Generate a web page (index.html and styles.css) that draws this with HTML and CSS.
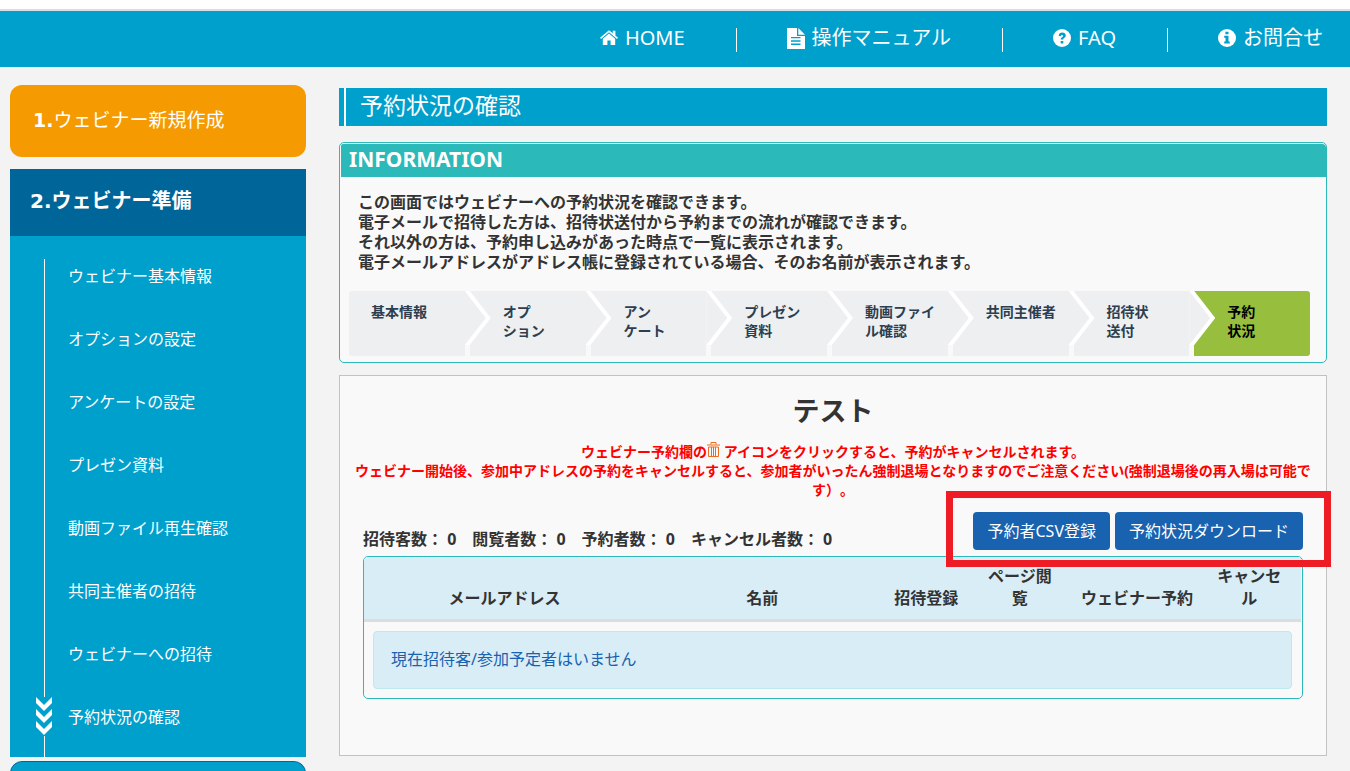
FILE: index.html
```html
<!DOCTYPE html>
<html lang="ja">
<head>
<meta charset="utf-8">
<title>予約状況の確認</title>
<link rel="stylesheet" href="styles.css">
</head>
<body>
<div class="page">
  <header class="topbar">
    <nav class="topnav">
      <a href="#"><svg class="icon" viewBox="0 0 18 18"><path d="M9 4.6 2.8 9.8V16h4.6v-4.4h3.2V16h4.6V9.8z"/><path d="M9 1.2 0 8.8l1 1.2 8-6.7 8 6.7 1-1.2-2.6-2.2V1.8h-2.6v2.5z"/></svg>HOME</a>
      <a href="#"><svg class="icon icon-file" viewBox="0 0 18 21"><path fill-rule="evenodd" d="M0 0h10v8h8v13H0zM4 9v1.3h9.500V9zm0 3.300v1.400h9.500v-1.400zm0 3.300V17h9.500v-1.400z"/><path d="M11.300 0 18 6.700h-6.700z"/></svg>操作マニュアル</a>
      <a href="#"><svg class="icon" viewBox="0 0 18 18"><circle cx="9" cy="9" r="9"/><path class="cut" d="M5.700 7C5.900 4.600 7.300 3.600 9.200 3.600c2 0 3.600 1.200 3.600 3 0 2.400-2.600 2.300-2.600 4H7.700c0-2.500 2.400-2.600 2.400-3.700 0-.6-.4-.9-1-.9-.7 0-1 .4-1.200 1.200zM7.700 11.900h2.600v2.500H7.700z"/></svg>FAQ</a>
      <a href="#"><svg class="icon" viewBox="0 0 18 18"><circle cx="9" cy="9" r="9"/><path class="cut" d="M7.400 2.700h3.100v2.600H7.400zM6.200 6.700h4.300v5.800h1.300v2H6.200v-2h1.300V8.700H6.200z"/></svg>お問合せ</a>
    </nav>
  </header>

  <div class="layout">
    <aside class="sidebar">
      <a class="side-create" href="#"><b>1.</b>ウェビナー新規作成</a>
      <div class="side-group">
        <h2><b>2.</b>ウェビナー準備</h2>
        <ul>
          <li><a href="#">ウェビナー基本情報</a></li>
          <li><a href="#">オプションの設定</a></li>
          <li><a href="#">アンケートの設定</a></li>
          <li><a href="#">プレゼン資料</a></li>
          <li><a href="#">動画ファイル再生確認</a></li>
          <li><a href="#">共同主催者の招待</a></li>
          <li><a href="#">ウェビナーへの招待</a></li>
          <li><svg class="marker" viewBox="0 0 16 39"><path d="M0 0l8 8 8-8v6l-8 8-8-8zM0 12l8 8 8-8v6l-8 8-8-8zM0 24l8 8 8-8v6l-8 8-8-8z"/></svg><a href="#">予約状況の確認</a></li>
        </ul>
      </div>
      <div class="side-next"></div>
    </aside>

    <main class="main">
      <h1 class="page-title">予約状況の確認</h1>

      <section class="info">
        <h2>INFORMATION</h2>
        <p>この画面ではウェビナーへの予約状況を確認できます。<br>電子メールで招待した方は、招待状送付から予約までの流れが確認できます。<br>それ以外の方は、予約申し込みがあった時点で一覧に表示されます。<br>電子メールアドレスがアドレス帳に登録されている場合、そのお名前が表示されます。</p>
        <ol class="steps">
          <li>基本情報</li>
          <li>オプ<br>ション</li>
          <li>アン<br>ケート</li>
          <li>プレゼン<br>資料</li>
          <li>動画ファイ<br>ル確認</li>
          <li>共同主催者</li>
          <li>招待状<br>送付</li>
          <li class="current">予約<br>状況</li>
        </ol>
      </section>

      <section class="panel">
        <h2>テスト</h2>
        <p class="notice">ウェビナー予約欄の<svg class="trash" viewBox="0 0 13 15"><path d="M4 2.500V.5h5v2M0 3h13M1.500 5v9.500h10V5zM4.500 5v9M6.500 5v9M8.500 5v9"/></svg> アイコンをクリックすると、予約がキャンセルされます。<br>ウェビナー開始後、参加中アドレスの予約をキャンセルすると、参加者がいったん強制退場となりますのでご注意ください(強制退場後の再入場は可能で<br>す）。</p>
        <div class="toolbar">
          <p class="counts">招待客数： 0　閲覧者数： 0　予約者数： 0　キャンセル者数： 0</p>
          <div class="actions">
            <button type="button">予約者CSV登録</button>
            <button type="button">予約状況ダウンロード</button>
          </div>
        </div>
        <div class="table-box">
          <table>
            <thead>
              <tr>
                <th class="col-mail">メールアドレス</th>
                <th class="col-name">名前</th>
                <th class="col-small">招待登録</th>
                <th class="col-small col-view">ページ閲覧</th>
                <th class="col-reserve">ウェビナー予約</th>
                <th class="col-small col-cancel">キャンセル</th>
              </tr>
            </thead>
            <tbody>
              <tr><td colspan="6"><div class="empty">現在招待客/参加予定者はいません</div></td></tr>
            </tbody>
          </table>
        </div>
      </section>
    </main>
  </div>
</div>
</body>
</html>
```

FILE: styles.css
```css
* { box-sizing: border-box; }

body {
  margin: 0;
  background: #f3f3f3;
  color: #333;
  font-family: "Noto Sans", "Noto Sans CJK JP", sans-serif;
  font-size: 16px;
  line-height: 22px;
  text-spacing-trim: space-all;
}

h1, h2, p, ul, ol { margin: 0; padding: 0; }
ul, ol { list-style: none; }
a { color: inherit; text-decoration: none; }

.page { height: 100vh; overflow: hidden; }

/* header */
.topbar {
  border-top: 9px solid #fff;
  background: #00a0cd;
}
.topnav {
  display: flex;
  justify-content: flex-end;
  padding: 17px 27px 15px 0;
  border-top: 2px solid #d8dfe6;
  color: #fff;
  font-size: 20px;
  line-height: 20px;
}
.topnav a {
  display: flex;
  align-items: center;
  gap: 7px;
  height: 24px;
  padding: 0 51px 4px 50px;
  border-left: 1px solid #fff;
}
.topnav a:first-child { border-left: 0; }
.topnav a:last-child { padding-right: 0; }
.icon { width: 18px; height: 18px; fill: #fff; }
.icon-file { height: 21px; }
.icon .cut { fill: #00a0cd; }

.layout {
  display: flex;
  align-items: flex-start;
  gap: 33px;
  padding: 18px 23px 0 10px;
}

/* sidebar */
.sidebar { flex: 0 0 296px; color: #fff; }
.sidebar b { font-family: "DejaVu Sans", sans-serif; }
.side-create {
  display: block;
  margin-bottom: 12px;
  padding: 23px 23px 25px;
  border-radius: 12px;
  background: #f59a00;
  font-size: 19px;
  line-height: 24px;
}
.side-group h2 {
  padding: 20px 20px 23px;
  background: #006699;
  font-size: 20px;
  line-height: 24px;
}
.side-group ul {
  padding: 8px 0 9px;
  background: linear-gradient(#fff, #fff) 34px 23px / 1px 100% no-repeat #00a0cd;
}
.side-group li {
  display: flex;
  align-items: center;
  height: 63px;
  padding-left: 58px;
}
.side-group li:has(.marker) { gap: 16px; padding-left: 26px; }
.marker { width: 16px; height: 39px; background: #00a0cd; fill: #fff; }
.side-next {
  height: 72px;
  margin-top: 4px;
  border: 1px solid #006699;
  border-radius: 12px;
  background: #00a0cd;
}

/* main column */
.main { flex: 1; min-width: 0; padding-top: 3px; }
.page-title {
  padding: 3px 16px 7px;
  border-left: 5px solid #00a0cd;
  background: linear-gradient(#fff, #fff) 0 0 / 2px 100% no-repeat #00a0cd;
  color: #fff;
  font-size: 23px;
  font-weight: 400;
  line-height: 28px;
}

.info {
  margin-top: 16px;
  padding: 1px 0 6px 1px;
  border: 1px solid #2cb9b9;
  border-radius: 5px;
  background: #f9f9f9;
}
.info h2 {
  padding: 3px 8px 6px;
  border-radius: 2px 4px 0 0;
  background: #2cb9b9;
  color: #fff;
  font-size: 21px;
  line-height: 24px;
}
.info p {
  padding: 15px 17px 19px;
  font-weight: 700;
  line-height: 20px;
}

.steps {
  display: flex;
  gap: 5px;
  padding: 0 16px 0 8px;
  color: #2c3e50;
  font-size: 14px;
  font-weight: 700;
  line-height: 19px;
}
.steps li {
  position: relative;
  flex: 1 1 100px;
  height: 65px;
  padding: 11px 0 0 33px;
  background: #edeff0;
  white-space: nowrap;
}
.steps li:first-child { padding-left: 22px; border-radius: 3px 0 0 3px; }
.steps li:not(:last-child)::before,
.steps li:not(:last-child)::after {
  content: "";
  position: absolute;
  z-index: 1;
  top: 0;
  left: 100%;
  width: 26px;
  height: 54px;
  background: #fff;
  clip-path: polygon(0 0, 5px 0, 26px 27px, 5px 54px, 0 54px);
}
.steps li:not(:last-child)::after {
  background: #edeff0;
  clip-path: polygon(0 0, 21px 27px, 0 54px);
}
.steps .current {
  border-radius: 0 3px 3px 0;
  background: #97bf3d;
  color: #000;
}

.panel {
  margin-top: 12px;
  padding: 18px 23px 56px;
  border: 1px solid #c2c2c2;
  background: #f9f9f9;
}
.panel h2 {
  font-size: 27px;
  line-height: 34px;
  text-align: center;
}
.notice {
  margin: 14px -10px 13px;
  color: #f00;
  font-size: 14px;
  font-weight: 700;
  line-height: 19px;
  text-align: center;
}
.trash {
  width: 13px;
  height: 15px;
  fill: none;
  stroke: #ec6c1f;
}

.toolbar {
  display: flex;
  align-items: flex-end;
  justify-content: space-between;
  margin-bottom: 6px;
}
.counts { font-weight: 700; white-space: pre; }
.actions { position: relative; display: flex; gap: 5px; }
.actions::after {
  content: "";
  position: absolute;
  z-index: 2;
  inset: -21px -28px -17px -27px;
  border: 7px solid #ee1c24;
  pointer-events: none;
}
.actions button {
  height: 38px;
  padding: 0 14px;
  border: 0;
  border-radius: 4px;
  background: #1862af;
  color: #fff;
  font: inherit;
}

.table-box {
  border: 1px solid #2cb9b9;
  border-radius: 5px;
  padding-right: 1px;
  overflow: hidden;
}
table {
  width: 100%;
  table-layout: fixed;
  border-collapse: separate;
  border-spacing: 0;
}
th {
  padding: 8px 4px 10px;
  border-bottom: 3px solid #ddd;
  background: #d9edf7;
  vertical-align: bottom;
}
.col-mail { width: 30%; }
.col-name { width: 25%; }
.col-small { width: 10%; }
.col-reserve { width: 15%; }
.col-view { padding-right: 8px; padding-left: 8px; }
.col-cancel { padding-right: 14px; }
td { padding: 9px; }
.empty {
  padding: 16px 17px 18px;
  border: 1px solid #bce8f1;
  border-radius: 4px;
  background: #d9edf7;
  color: #1862af;
}
```
